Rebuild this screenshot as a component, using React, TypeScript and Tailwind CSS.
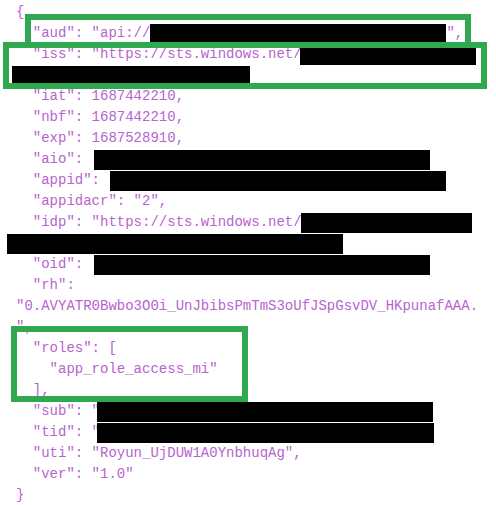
type Seg = string | { bar: number; ml?: number };

const lines: Seg[][] = [
  ['{'],
  ['  "aud": "api://', { bar: 296, ml: 0 }, '",'],
  ['  "iss": "https://sts.windows.net/', { bar: 176, ml: -2 }],
  [{ bar: 238, ml: -4 }],
  ['  "iat": 1687442210,'],
  ['  "nbf": 1687442210,'],
  ['  "exp": 1687528910,'],
  ['  "aio": ', { bar: 336, ml: 2 }],
  ['  "appid": ', { bar: 336, ml: 2 }],
  ['  "appidacr": "2",'],
  ['  "idp": "https://sts.windows.net/', { bar: 171, ml: -1 }],
  [{ bar: 336, ml: -9 }],
  ['  "oid": ', { bar: 336, ml: 2 }],
  ['  "rh":'],
  ['"0.AVYATR0Bwbo3O0i_UnJbibsPmTmS3oUfJSpGsvDV_HKpunafAAA.'],
  ['",'],
  ['  "roles": ['],
  ['    "app_role_access_mi"'],
  ['  ],'],
  ['  "sub": "', { bar: 336, ml: -3 }],
  ['  "tid": "', { bar: 337, ml: -3 }],
  ['  "uti": "Royun_UjDUW1A0YnbhuqAg",'],
  ['  "ver": "1.0"'],
  ['}'],
];

export default function App() {
  return (
    <div className="relative h-[505px] w-[496px] overflow-hidden bg-white">
      <div className="pl-[16px] pt-[2px] font-['Liberation_Mono',monospace] text-[14px] text-[#b764cf]">
        {lines.map((line, i) => (
          <div key={i} className="flex h-[21px] items-center whitespace-pre">
            {line.map((seg, j) =>
              typeof seg === 'string' ? (
                <span key={j}>{seg}</span>
              ) : (
                <span
                  key={j}
                  className="inline-block h-[20px] shrink-0 bg-black"
                  style={{ width: seg.bar, marginLeft: seg.ml ?? 0 }}
                />
              ),
            )}
          </div>
        ))}
      </div>

      {/* annotation boxes */}
      <div className="absolute left-[25px] top-[14px] h-[34px] w-[446px] border-[6px] border-[#2fa84f]" />
      <div className="absolute left-[3px] top-[42px] h-[47px] w-[484px] border-[6px] border-[#2fa84f]" />
      <div className="absolute left-[11px] top-[326px] h-[76px] w-[237px] border-[6px] border-[#2fa84f]" />
    </div>
  );
}
